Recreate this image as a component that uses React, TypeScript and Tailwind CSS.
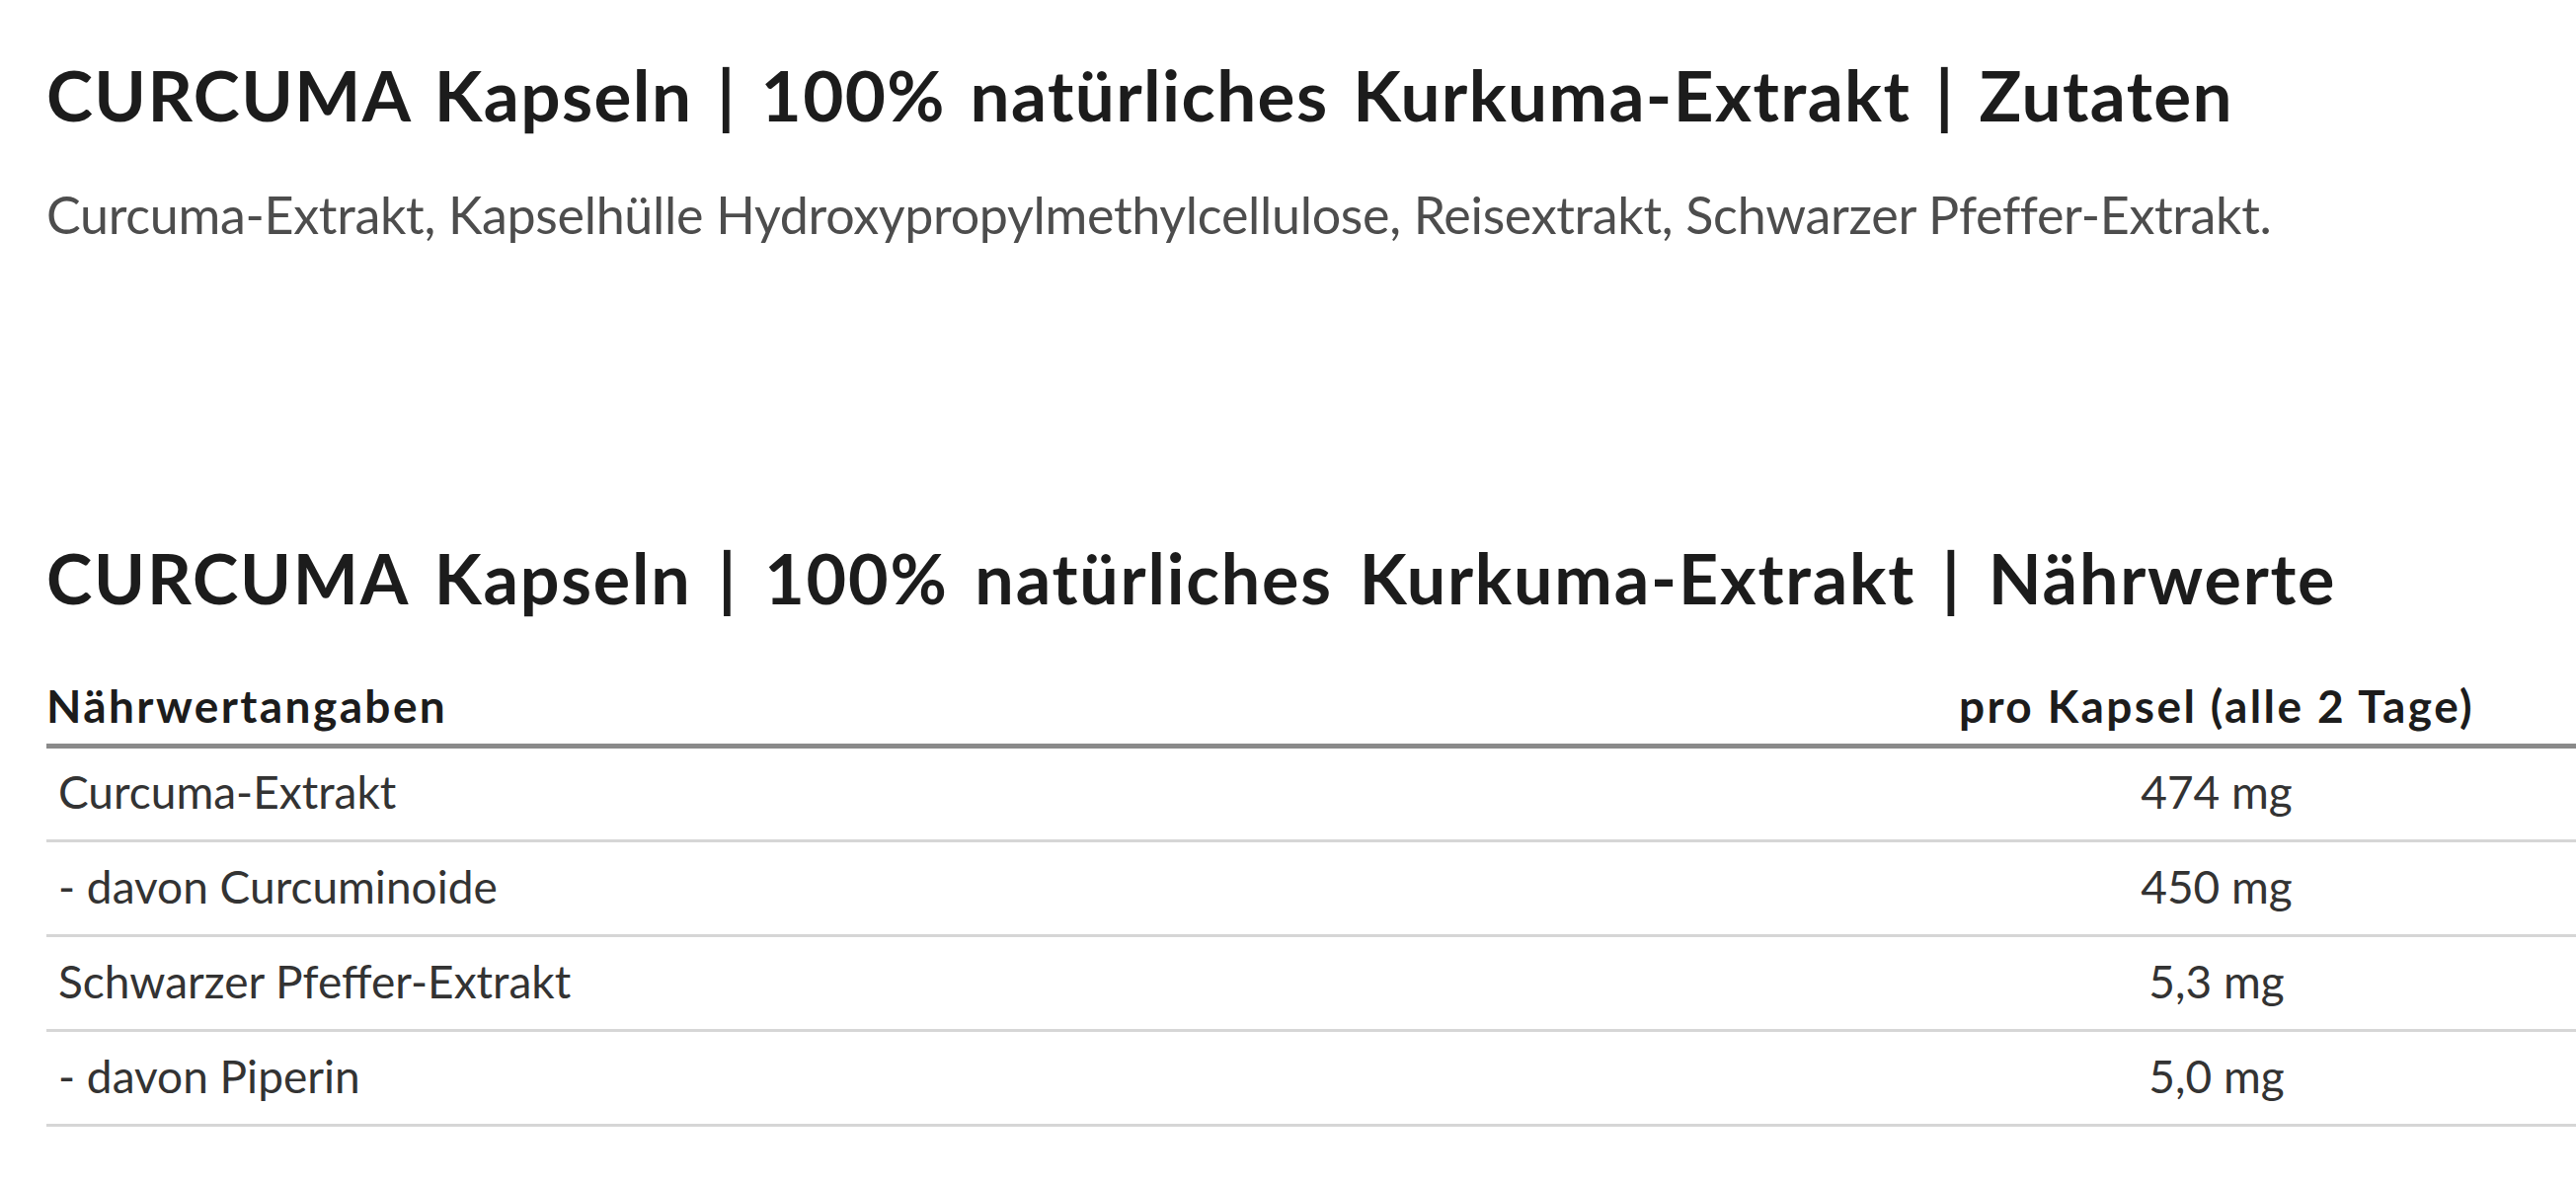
import React from 'react'

interface Row {
  name: string
  amount: string
}

const rows: Row[] = [
  { name: 'Curcuma-Extrakt', amount: '474 mg' },
  { name: '- davon Curcuminoide', amount: '450 mg' },
  { name: 'Schwarzer Pfeffer-Extrakt', amount: '5,3 mg' },
  { name: '- davon Piperin', amount: '5,0 mg' },
]

const App: React.FC = () => {
  return (
    <div className="min-h-screen w-full overflow-hidden bg-white pl-[47px] font-['Lato',sans-serif]">
      <h2 className="pt-[60px] text-[71px] leading-none font-bold text-[#1c1c1c] tracking-[1.4px] [word-spacing:6px] whitespace-nowrap">
        CURCUMA Kapseln | 100% natürliches Kurkuma-Extrakt | Zutaten
      </h2>
      <p className="mt-[60px] text-[52px] leading-none text-[#4d4d4d] tracking-[-0.3px] whitespace-nowrap">
        Curcuma-Extrakt, Kapselhülle Hydroxypropylmethylcellulose, Reisextrakt, Schwarzer Pfeffer-Extrakt.
      </p>

      <h2 className="mt-[307px] text-[70px] leading-none font-bold text-[#1c1c1c] tracking-[1.8px] [word-spacing:8px] whitespace-nowrap">
        CURCUMA Kapseln | 100% natürliches Kurkuma-Extrakt | Nährwerte
      </h2>

      <table className="mt-[72px] w-full border-collapse text-[46px] leading-none text-[#333]">
        <thead>
          <tr className="border-b-[5px] border-[#8a8a8a]">
            <th className="pb-[15px] text-left font-bold text-[#1c1c1c] tracking-[2.4px]">Nährwertangaben</th>
            <th className="w-[728px] pb-[15px] text-center font-bold text-[#1c1c1c] tracking-[2.4px]">pro Kapsel (alle 2 Tage)</th>
          </tr>
        </thead>
        <tbody>
          {rows.map(row => (
            <tr key={row.name} className="border-b-[3px] border-[#d6d6d6]">
              <td className="h-[96px] pl-[12px] pb-[4px] align-middle">{row.name}</td>
              <td className="h-[96px] pb-[4px] text-center align-middle">{row.amount}</td>
            </tr>
          ))}
        </tbody>
      </table>
    </div>
  )
}

export default App
